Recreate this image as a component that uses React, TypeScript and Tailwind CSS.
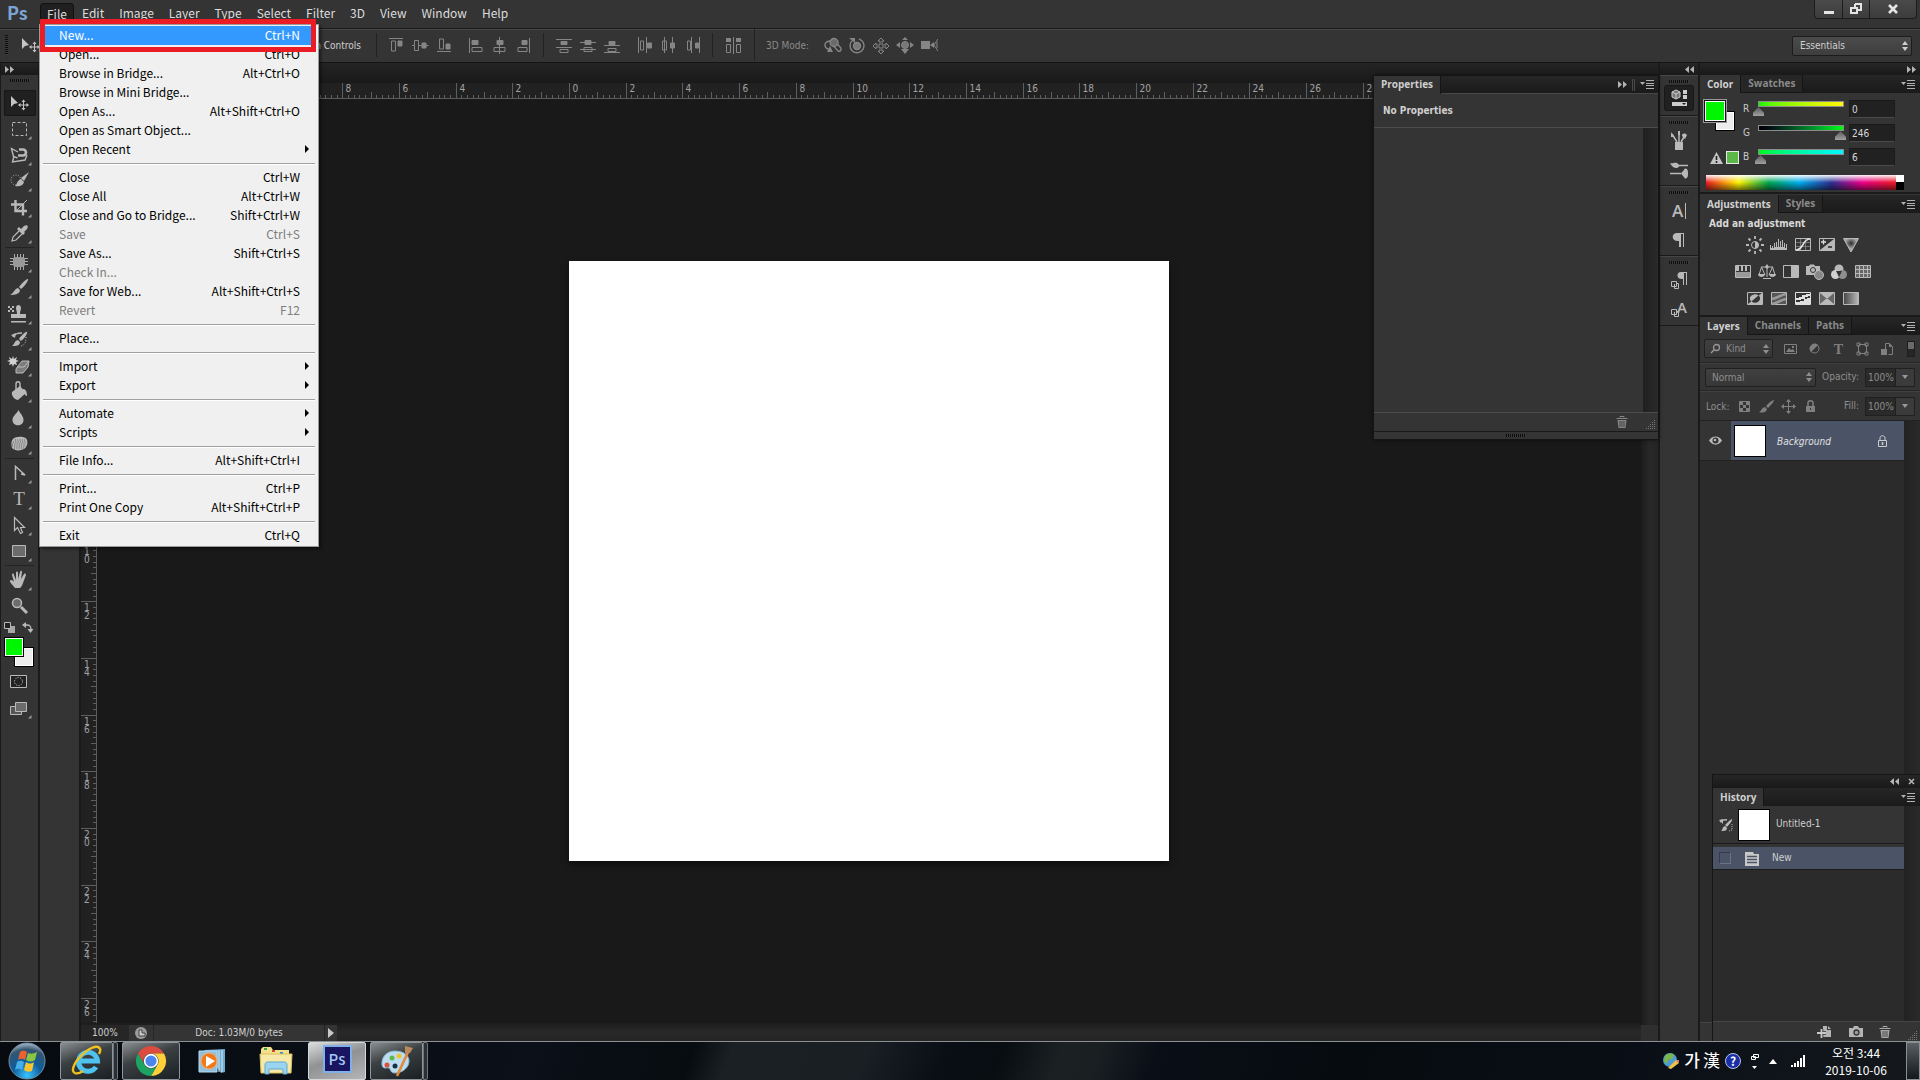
import { ReactNode } from "react";

type MenuEntry = { label: string; keys?: string; disabled?: boolean; sub?: boolean };

const MENUS = ["File", "Edit", "Image", "Layer", "Type", "Select", "Filter", "3D", "View", "Window", "Help"];

const FILE_MENU: MenuEntry[][] = [
  [
    { label: "New...", keys: "Ctrl+N" },
    { label: "Open...", keys: "Ctrl+O" },
    { label: "Browse in Bridge...", keys: "Alt+Ctrl+O" },
    { label: "Browse in Mini Bridge..." },
    { label: "Open As...", keys: "Alt+Shift+Ctrl+O" },
    { label: "Open as Smart Object..." },
    { label: "Open Recent", sub: true },
  ],
  [
    { label: "Close", keys: "Ctrl+W" },
    { label: "Close All", keys: "Alt+Ctrl+W" },
    { label: "Close and Go to Bridge...", keys: "Shift+Ctrl+W" },
    { label: "Save", keys: "Ctrl+S", disabled: true },
    { label: "Save As...", keys: "Shift+Ctrl+S" },
    { label: "Check In...", disabled: true },
    { label: "Save for Web...", keys: "Alt+Shift+Ctrl+S" },
    { label: "Revert", keys: "F12", disabled: true },
  ],
  [{ label: "Place..." }],
  [
    { label: "Import", sub: true },
    { label: "Export", sub: true },
  ],
  [
    { label: "Automate", sub: true },
    { label: "Scripts", sub: true },
  ],
  [{ label: "File Info...", keys: "Alt+Shift+Ctrl+I" }],
  [
    { label: "Print...", keys: "Ctrl+P" },
    { label: "Print One Copy", keys: "Alt+Shift+Ctrl+P" },
  ],
  [{ label: "Exit", keys: "Ctrl+Q" }],
];

function Svg({ w, h, children }: { w: number; h: number; children: ReactNode }) {
  return (
    <svg width={w} height={h} viewBox={`0 0 ${w} ${h}`} fill="none" className="block shrink-0" aria-hidden="true">
      {children}
    </svg>
  );
}

function Grip() {
  return <div className="h-[3px] w-5 bg-[repeating-linear-gradient(90deg,#0c0c0c_0_1px,#3a3a3a_1px_2px)]" />;
}

function UpDown() {
  return (
    <Svg w={6} h={10}>
      <path d="M3 0l3 4H0zM3 10l3-4H0z" fill="currentColor" />
    </Svg>
  );
}

function PanelMenuIcon() {
  return (
    <Svg w={14} h={9}>
      <path d="M0 2h5L2.500 5z" fill="#b0b0b0" />
      <path d="M6 .5h8M6 3.500h8M6 5.500h8M6 8.500h8" stroke="#b0b0b0" />
    </Svg>
  );
}

function Chevrons({ left }: { left?: boolean }) {
  return (
    <Svg w={9} h={7}>
      <path d={left ? "M4 0v7L0 3.500zM9 0v7L5 3.500z" : "M0 0v7l4-3.500zM5 0v7l4-3.500z"} fill="#b4b4b4" />
    </Svg>
  );
}

function TrashIcon() {
  return (
    <Svg w={12} h={12}>
      <path d="M4 1.500V.5h4v1M.5 2.500h11" stroke="#a8a8a8" />
      <path d="M1.500 4h9l-1 8h-7z" fill="#a8a8a8" />
      <path d="M4 5v6M6 5v6M8 5v6" stroke="#343434" strokeWidth=".8" />
    </Svg>
  );
}

function ResizeDots() {
  return (
    <Svg w={10} h={10}>
      {[0, 1, 2, 3, 4].map((row) =>
        [0, 1, 2, 3, 4].filter((col) => col + row >= 4).map((col) => <rect key={`${row}-${col}`} x={col * 2} y={row * 2} width="1" height="1" fill="#757575" />)
      )}
    </Svg>
  );
}

/* ---------- menu bar ---------- */

function FileMenu() {
  return (
    <div className="absolute top-[21px] left-[-1px] z-30 w-70 border border-[#9a9a9a] bg-[#f0f0f0] py-px text-black shadow-[2px_2px_3px_rgba(0,0,0,0.5)]">
      {FILE_MENU.map((group, g) => (
        <div key={g}>
          {g > 0 && (
            <div className="flex h-[9px] items-center px-[3px]">
              <div className="h-[2px] w-full border-t border-[#a0a0a0] bg-white" />
            </div>
          )}
          {group.map((item) => (
            <button
              key={item.label}
              disabled={item.disabled}
              className={`mx-[3px] flex h-[19px] w-[272px] items-center justify-between pb-[2px] pl-4 text-left ${
                item.label === "New..." ? "bg-[#3399ff] text-white" : item.disabled ? "text-[#7d7d7d]" : "text-black"
              } ${item.sub ? "pr-[6px]" : "pr-[15px]"}`}
            >
              <span>{item.label}</span>
              {item.keys && <span>{item.keys}</span>}
              {item.sub && (
                <Svg w={4} h={8}>
                  <path d="M0 0l4 4-4 4z" fill="#000" />
                </Svg>
              )}
            </button>
          ))}
        </div>
      ))}
      <div className="pointer-events-none absolute top-[-6px] left-0 h-[33px] w-[276px] border-[5px] border-[#ec1c24]" />
    </div>
  );
}

function MenuBar() {
  return (
    <header className="flex h-7 shrink-0 justify-between bg-[#343434] font-['Noto_Sans_CJK_KR',sans-serif] text-[12px] leading-[18px] text-[#dcdcdc]">
      <div className="flex">
        <h1 className="w-10 pt-px pl-[7px] font-['Noto_Sans_CJK_KR',sans-serif] text-[18px] leading-[22px] font-bold text-[#7ba5d6]">Ps</h1>
        <nav className="flex pt-[3px]">
          {MENUS.map((name) =>
            name === "File" ? (
              <div key={name} className="relative">
                <button className="h-[21px] rounded-t border border-b-0 border-[#111] bg-[#202020] px-[6px] pb-px leading-[18px]">{name}</button>
                <FileMenu />
              </div>
            ) : (
              <button key={name} className="h-5 pr-[7px] pl-2 leading-5">
                {name}
              </button>
            )
          )}
        </nav>
      </div>
      <div className="mr-[3px] flex h-[19px] divide-x divide-[#1c1c1c] rounded-b border border-t-0 border-[#1c1c1c] bg-linear-to-b from-[#4a4a4a] to-[#3c3c3c]">
        <button aria-label="Minimize" className="flex w-7 items-center justify-center">
          <Svg w={12} h={12}>
            <path d="M1 8h10v3H1z" fill="#e4e4e4" />
          </Svg>
        </button>
        <button aria-label="Restore" className="flex w-[27px] items-center justify-center">
          <Svg w={12} h={12}>
            <path d="M5 1h6v6H8M5 4V1" stroke="#e4e4e4" strokeWidth="2" />
            <path d="M1 5h6v5H1z" stroke="#e4e4e4" strokeWidth="2" />
          </Svg>
        </button>
        <button aria-label="Close" className="flex w-[46px] items-center justify-center">
          <Svg w={12} h={12}>
            <path d="M2 2l8 8M10 2l-8 8" stroke="#e4e4e4" strokeWidth="2.600" />
          </Svg>
        </button>
      </div>
    </header>
  );
}

/* ---------- options bar ---------- */

const G = "#858585";

const ALIGN_A = [
  <path d="M1 1.500h14M3.500 4h4v10h-4z M10 4h4v5h-4z" stroke={G} fill="none" key="f" />,
  <path d="M0 8.500h2.500v-5h4v10h-4v-5M6.500 8.500h10M10 6h4v5h-4z" stroke={G} key="g" />,
  <path d="M1 14.500h14M3.500 2h4v10h-4z M10 7h4v5h-4z" stroke={G} key="h" />,
];

const ALIGN_B = [
  <path d="M2.500 1v15M5 3.500h6v4H5z M5 10.500h10v4H5z" stroke={G} key="a" />,
  <path d="M8.500 0v17M6 3.500h6v4H6z M3 10.500h11v4H3z" stroke={G} key="b" />,
  <path d="M14.500 1v15M7 3.500h5v4H7z M3 10.500h9v4H3z" stroke={G} key="c" />,
];

const DIST_A = [
  <path d="M0 2.500h16M5 4.500h6v3H5z M0 10.500h16M4 12.500h8v3H4z" stroke={G} key="a" />,
  <path d="M0 5.500h16M5 3.500h6v4H5z M0 12.500h16M4 10.500h8v4H4z" stroke={G} key="b" />,
  <path d="M0 8.500h16M5 4.500h6v3H5z M0 15.500h16M4 11.500h8v3H4z" stroke={G} key="c" />,
];

const DIST_B = [
  <path d="M2.500 0v16M4.500 4h3v9h-3z M10.500 0v16M11.500 6h4v5h-4z" stroke={G} key="a" />,
  <path d="M4.500 0v16M2.500 4h4v9h-4z M12.500 0v16M10.500 6h4v5h-4z" stroke={G} key="b" />,
  <path d="M7.500 0v16M3.500 4h3v9h-3z M15.500 0v16M11.500 6h3v5h-3z" stroke={G} key="c" />,
];

// solid half of every align / distribute glyph
const SOLID: Record<string, string[]> = {
  alignA: ["M10 4h4v5h-4z", "M10 6h4v5h-4z", "M10 7h4v5h-4z"],
  alignB: ["M5 3h6v5H5z", "M6 3h6v5H6z", "M7 3h5v5H7z"],
  distA: ["M5 4h6v4H5z", "M5 3h6v5H5z", "M5 4h6v4H5z"],
  distB: ["M11 6h5v5h-5z", "M10 6h5v5h-5z", "M11 6h4v5h-4z"],
};

function IconRun({ icons, solid }: { icons: ReactNode[]; solid: string[] }) {
  return (
    <div className="flex">
      {icons.map((icon, i) => (
        <button key={i} className="flex w-6 justify-center">
          <Svg w={17} h={17}>
            {icon}
            <path d={solid[i]} fill={G} />
          </Svg>
        </button>
      ))}
    </div>
  );
}

const MODES_3D = [
  <g key="orbit" stroke={G} strokeWidth="1.400">
    <circle cx="10" cy="5.500" r="4" fill="#6a6a6a" />
    <path d="M6 4C2 4 0 7 1.500 10c1 2 3 2.500 5 2.500" />
    <path d="M10 9.500l4 4.500c3 1 4-2 2-4l-3-3.500" />
    <path d="M6 9l3 6H3z" fill={G} stroke="none" />
  </g>,
  <g key="roll" stroke={G} strokeWidth="1.400">
    <circle cx="9" cy="9" r="3.500" fill="#777" />
    <path d="M5 3a7 7 0 1 0 6-1" />
    <path d="M1 1h6v5z" fill={G} stroke="none" />
  </g>,
  <path key="pan" d="M9 1l3 3h-2v4h4V6l3 3-3 3v-2h-4v4h2l-3 3-3-3h2v-4H4v2L1 9l3-3v2h4V4H6z" stroke={G} />,
  <g key="slide">
    <circle cx="9" cy="8" r="3.500" fill="#777" stroke={G} />
    <path d="M0 8l4-3v6zM18 8l-4-3v6zM9 0l3 3H6zM9 17l4-5H5z" fill={G} />
  </g>,
  <g key="zoom">
    <path d="M1 4h9v8H1zM10 8l4-3v6z" fill={G} />
    <path d="M18 2l-4 6 4 6M17 5v6" stroke={G} />
  </g>,
];

function MoveGlyph() {
  return (
    <>
      <path d="M7 6v11l3-3 4-1z" fill="#c4c4c4" />
      <path d="M19.500 10.500v9M15 15h9" stroke="#c4c4c4" />
      <path d="M19.500 9.500l2 2.500h-4zM19.500 20.500l2-2.500h-4zM14 15l2.500-2v4zM25 15l-2.500-2v4z" fill="#c4c4c4" />
    </>
  );
}

function OptionsBar() {
  return (
    <div className="flex h-[34px] shrink-0 items-center justify-between border-t border-[#1a1a1a] bg-[#343434] text-[10px] text-[#cfcfcf] shadow-[inset_0_1px_#474747]">
      <div className="flex h-full items-center pb-px">
        <div className="ml-[5px] h-5 w-[3px] bg-[repeating-linear-gradient(#0c0c0c_0_1px,#3a3a3a_1px_2px)]" />
        <div className="ml-[7px]">
          <Svg w={32} h={26}>
            <MoveGlyph />
          </Svg>
        </div>
        <label className="flex w-[314px] items-center justify-end gap-1">
          <input type="checkbox" className="h-3 w-3" />
          Show Transform Controls
        </label>
        <div className="ml-[15px] h-6 w-px bg-[#222]" />
        <div className="ml-[7px] flex gap-[7px]">
          <IconRun icons={ALIGN_A} solid={SOLID.alignA} />
          <IconRun icons={ALIGN_B} solid={SOLID.alignB} />
        </div>
        <div className="ml-2 h-6 w-px bg-[#222]" />
        <div className="ml-2 flex gap-2">
          <IconRun icons={DIST_A} solid={SOLID.distA} />
          <IconRun icons={DIST_B} solid={SOLID.distB} />
        </div>
        <div className="ml-2 h-6 w-px bg-[#222]" />
        <button className="ml-2 flex w-6 justify-center" aria-label="Auto-align layers">
          <Svg w={17} h={17}>
            <path d="M1 1h5v4H1zM11 1h5v4h-5z" fill={G} />
            <path d="M1.500 7.500h4v8h-4zM11.500 7.500h4v8h-4zM8.500 0v17" stroke={G} />
          </Svg>
        </button>
        <div className="ml-[9px] h-full w-px bg-[#222]" />
        <span className="ml-[11px] w-[55px] text-[#8a8a8a]">3D Mode:</span>
        {MODES_3D.map((icon, i) => (
          <button key={i} className="flex w-6 justify-center">
            <Svg w={18} h={17}>{icon}</Svg>
          </button>
        ))}
      </div>
      <div className="relative mr-2 flex items-center text-[#cfcfcf]">
        <select aria-label="Workspace" className="h-5 w-30 appearance-none rounded-xs border border-[#1c1c1c] bg-linear-to-b from-[#4b4b4b] to-[#3e3e3e] px-[7px] leading-4">
          <option>Essentials</option>
        </select>
        <div className="pointer-events-none absolute right-1">
          <UpDown />
        </div>
      </div>
    </div>
  );
}

/* ---------- toolbar ---------- */

const C = "#b9b9b9";

const TOOLS: { name: string; group: number; plain?: boolean; icon: ReactNode }[] = [
  { name: "Move", group: 0, plain: true, icon: <MoveGlyph /> },
  { name: "Marquee", group: 0, icon: <path d="M8.500 6.500h14v13h-14z" stroke={C} strokeDasharray="3 2" /> },
  {
    name: "Lasso",
    group: 0,
    icon: (
      <g stroke={C}>
        <path d="M14 10L7.500 6.500l2 8 4 1.500M10 14l-1.500 6L21 18l2-5" strokeWidth="1.400" />
        <path d="M15 7.500h4a3 3 0 0 1 0 6h-5" strokeWidth="2.600" />
      </g>
    ),
  },
  {
    name: "Quick Selection",
    group: 0,
    icon: (
      <>
        <circle cx="12" cy="12" r="5" stroke={C} strokeDasharray="1 1.500" />
        <path d="M25 4l-8 6 3 3z" fill={C} />
        <path d="M17 11l3 3c-1 4-5 5-9 4 2-1 2-6 6-7z" fill={C} />
      </>
    ),
  },
  {
    name: "Crop",
    group: 0,
    icon: (
      <g stroke={C}>
        <path d="M7 10.500h12v11M11.500 6v11H23" strokeWidth="2.400" />
        <path d="M12 17L23 6" />
      </g>
    ),
  },
  {
    name: "Eyedropper",
    group: 0,
    icon: (
      <>
        <path d="M17 9l3-3c3-2 5 0 3 3l-3 3 1 1-2 2-6-6 2-2z" fill={C} />
        <path d="M15 11l-6 6-1 4 4-1 6-6" stroke={C} strokeWidth="1.200" />
      </>
    ),
  },
  {
    name: "Healing",
    group: 1,
    icon: (
      <>
        <path d="M10.500 5v16M13.500 5v16M16.500 5v16M19.500 5v16M6 9.500h18M6 12.500h18M6 15.500h18" stroke={C} strokeWidth=".9" />
        <rect x="9" y="8" width="12" height="10" rx="3" fill="#999" />
      </>
    ),
  },
  {
    name: "Brush",
    group: 1,
    icon: <path d="M24 4c1 1-4 8-7 10l-2-2c2-3 8-9 9-8zM14 13l2 2c0 4-5 5-10 5 4-2 4-6 8-7z" fill={C} />,
  },
  {
    name: "Clone Stamp",
    group: 1,
    icon: (
      <>
        <path d="M4 5h2v2H4zM8 5h2v2H8zM6 7h2v2H6zM4 9h2v2H4zM8 9h2v2H8z" fill={C} />
        <path d="M12 7c0-4 5-4 5 0 0 2-1 3-1 6h6v4H7v-4h6c0-3-1-4-1-6zM7 20h15v1.500H7z" fill={C} />
      </>
    ),
  },
  {
    name: "History Brush",
    group: 1,
    icon: (
      <>
        <path d="M23 5c1 1-3 7-6 9l-2-2c2-3 7-8 8-7zM14 13l2 2c0 4-4 4-8 4 3-2 2-5 6-6z" fill={C} />
        <path d="M9 10c1-3 5-4 9-4" stroke={C} strokeWidth="1.500" />
        <path d="M7 8l5-2-1 5z" fill={C} />
        <path d="M22 10c0 5-1 8-5 9" stroke={C} strokeDasharray="1 1.500" />
      </>
    ),
  },
  {
    name: "Background Eraser",
    group: 1,
    icon: (
      <>
        <path d="M14 13l4-5h7l-1 6-5 6h-7v-4z" fill="#7c7c7c" stroke={C} />
        <path d="M13 14h7l5-6" stroke={C} />
        <path d="M9 3l1 3 3-2-1 3 3 1-3 1 1 3-3-1-1 3-1-3-3 1 1-3-3-1 3-1-1-3 3 2z" fill="#d0d0d0" />
      </>
    ),
  },
  {
    name: "Paint Bucket",
    group: 1,
    icon: (
      <>
        <path d="M8 13l8-6 6 7-8 7c-3 0-7-4-6-8z" fill={C} />
        <path d="M12 12V5c0-3 4-3 4 0v5" stroke={C} strokeWidth="1.400" />
        <path d="M19 10c3 0 4 3 4 7-2 0-2-3-4-3z" fill={C} />
      </>
    ),
  },
  { name: "Blur", group: 1, icon: <path d="M14.500 5c2 4 5 6 5 10 0 7-11 7-11 0 0-4 4-6 6-10z" fill={C} /> },
  {
    name: "Sponge",
    group: 1,
    icon: (
      <>
        <path d="M9 8c3-3 13-3 14 1 1 3 0 7-3 9-4 2-9 2-12-1-1-3-1-7 1-9z" fill={C} />
        <path d="M9 11h13M8 13h14M8 15h14M10 17h10M11 9h10" stroke="#555" strokeDasharray="1 1.300" />
      </>
    ),
  },
  { name: "Pen", group: 2, icon: <path d="M11.500 20V6.500L21 15l-4-1" stroke={C} strokeWidth="1.500" /> },
  {
    name: "Type",
    group: 2,
    icon: (
      <text x="15" y="19" textAnchor="middle" fontFamily="Liberation Serif" fontSize="19" fill={C}>
        T
      </text>
    ),
  },
  { name: "Path Selection", group: 2, icon: <path d="M10.500 5.500v13l3-3 3 6 2-1-2-5h4z" stroke={C} strokeWidth="1.200" /> },
  { name: "Rectangle", group: 2, icon: <path d="M8.500 7.500h13v11h-13z" fill="#6c6c6c" stroke={C} /> },
  {
    name: "Hand",
    group: 3,
    icon: (
      <path
        d="M11 21c-2-3-5-5-5-7s3-1 4 1L8 8c0-2 2-2 2 0l2 5V6c0-2 2-2 2 0v6l2-7c1-2 2-1 2 0l-1 7 3-5c1-1 2 0 2 1l-3 8c-1 3-2 4-3 5z"
        fill={C}
      />
    ),
  },
  {
    name: "Zoom",
    group: 3,
    plain: true,
    icon: (
      <>
        <circle cx="13" cy="10" r="4.500" fill="#6c6c6c" stroke={C} strokeWidth="1.500" />
        <path d="M17 14l6 6" stroke={C} strokeWidth="3" />
      </>
    ),
  },
];

function ToolButton({ name, plain, icon }: { name: string; plain?: boolean; icon: ReactNode }) {
  const active = name === "Move";
  return (
    <button
      aria-label={name}
      className={`mx-[3px] flex h-[26px] w-8 rounded-xs ${active ? "bg-[#202020] shadow-[inset_0_0_0_1px_#161616]" : ""}`}
    >
      <Svg w={32} h={26}>
        {icon}
        {!plain && <path d="M27.500 20v3.500H24z" fill="#9a9a9a" />}
      </Svg>
    </button>
  );
}

function Toolbar() {
  return (
    <aside className="flex w-10 shrink-0 flex-col border-r-2 border-l border-[#1a1a1a] bg-[#343434]">
      <div className="flex h-3 items-center bg-linear-to-b from-[#262626] to-[#191919] pl-1">
        <Chevrons />
      </div>
      <div className="flex h-[15px] justify-center pt-1">
        <Grip />
      </div>
      {[0, 1, 2, 3].map((g) => (
        <div key={g}>
          {g > 0 && <div className="mx-1 my-px h-px bg-[#232323]" />}
          {TOOLS.filter((t) => t.group === g).map((t) => (
            <ToolButton key={t.name} name={t.name} plain={t.plain} icon={t.icon} />
          ))}
        </div>
      ))}
      <div className="flex h-4 items-center gap-[7px] pl-[3px]">
        <Svg w={11} h={11}>
          <path d="M4 4h7v7H4z" fill="#a8a8a8" />
          <path d="M.5.5h6v6h-6z" fill="#222" stroke={C} />
        </Svg>
        <Svg w={11} h={11}>
          <path d="M3 3h2c3 0 4 1 4 5" stroke={C} strokeWidth="1.400" />
          <path d="M0 3l4-3v6zM8.500 11l3-4h-6z" fill={C} />
        </Svg>
      </div>
      <div className="relative h-[30px]">
        <div className="absolute top-3 left-[13px] h-5 w-5 border border-black bg-[#ececec] shadow-[inset_0_0_0_1px_#fff]" />
        <div className="absolute top-[2px] left-[3px] h-5 w-5 border border-black bg-[#00f600] shadow-[inset_0_0_0_1px_#fff]" />
      </div>
      <button aria-label="Quick mask" className="mx-[3px] mt-1 h-[26px] w-8">
        <Svg w={32} h={26}>
          <path d="M6.500 6.500h16v12h-16z" fill="#222" stroke={C} />
          <circle cx="14.500" cy="12.500" r="4" stroke="#ddd" strokeDasharray="1 1.500" />
        </Svg>
      </button>
      <ToolButton
        name="Screen mode"
        icon={
          <>
            <path d="M6.500 11.500h11v8h-11z" fill="#555" stroke={C} />
            <path d="M11.500 7.500h11v9h-11z" fill="#6c6c6c" stroke={C} />
          </>
        }
      />
    </aside>
  );
}

/* ---------- document ---------- */

const CM = 56.7 / 2;

function HorizontalRuler() {
  const ticks = Array.from({ length: 276 }, (_, i) => i - 86);
  return (
    <svg className="block h-4 w-full shrink-0 border-b border-[#5c5c5c] bg-[#212121]" fontSize="10" fill="#a2a2a2">
      {ticks.map((t) => {
        const x = Math.round(488 + (t * CM) / 5) + 0.5;
        const label = t % 10 === 0;
        return (
          <g key={t}>
            <line x1={x} x2={x} y1={label ? 0 : t % 5 === 0 ? 9 : 12} y2="16" stroke="#5e5e5e" />
            {label && (
              <text x={x + 3} y="9">
                {Math.abs(t / 5)}
              </text>
            )}
          </g>
        );
      })}
    </svg>
  );
}

function VerticalRuler() {
  const ticks = Array.from({ length: 164 }, (_, i) => i - 28);
  return (
    <svg className="block h-full w-4 shrink-0 border-r border-[#5c5c5c] bg-[#212121]" fontSize="10" fill="#a2a2a2">
      {ticks.map((t) => {
        const y = Math.round(162 + (t * CM) / 5) + 0.5;
        const label = t % 10 === 0;
        return (
          <g key={t}>
            <line x1={label ? 0 : t % 5 === 0 ? 10 : 12} x2="16" y1={y} y2={y} stroke="#5e5e5e" />
            {label &&
              String(Math.abs(t / 5))
                .split("")
                .map((digit, i) => (
                  <text key={i} x="3" y={y + 9 + i * 8}>
                    {digit}
                  </text>
                ))}
          </g>
        );
      })}
    </svg>
  );
}

function DocumentArea() {
  return (
    <main className="flex min-w-0 flex-1 flex-col border-r-2 border-l-2 border-[#1a1a1a] bg-[#191919]">
      <div className="h-5 shrink-0 bg-linear-to-b from-[#242424] to-[#191919]" />
      <div className="flex min-h-0 flex-1">
        <div className="flex min-w-0 flex-1 flex-col">
          <HorizontalRuler />
          <div className="flex min-h-0 flex-1">
            <VerticalRuler />
            <div className="flex flex-1 items-center justify-center">
              <div className="h-150 w-150 bg-white shadow-[0_3px_6px_rgba(0,0,0,0.5)]" />
            </div>
          </div>
          <div className="flex h-[18px] shrink-0 items-center bg-linear-to-b from-[#1c1c1c] via-[#292929] to-[#242424] pt-px text-[10px] leading-4 text-[#d0d0d0]">
            <span className="h-4 w-12 bg-[#262626] pl-[11px]">100%</span>
            <span className="flex h-4 w-6 items-center justify-center bg-[#343434]">
              <Svg w={12} h={12}>
                <circle cx="6" cy="6" r="6" fill="#9c9c9c" />
                <path d="M4 3h3v3h3v3H4z" fill="#ccc" stroke="#444" />
              </Svg>
            </span>
            <span className="ml-px h-4 w-[170px] bg-[#343434] text-center">Doc: 1.03M/0 bytes</span>
            <button aria-label="Status options" className="ml-px flex h-4 w-3 items-center justify-center bg-[#343434]">
              <Svg w={6} h={10}>
                <path d="M0 0v10l6-5z" fill="#c8c8c8" />
              </Svg>
            </button>
          </div>
        </div>
        <div className="flex w-[17px] flex-col justify-end bg-linear-to-r from-[#1c1c1c] via-[#282828] to-[#242424]">
          <div className="h-4 bg-[#2f2f2f]" />
        </div>
      </div>
    </main>
  );
}

function PropertiesPanel() {
  return (
    <section className="absolute top-[76px] right-[262px] z-10 w-[284px] bg-[#343434] text-[10px] font-bold text-[#cfcfcf] shadow-[0_0_0_1px_#151515,0_0_4px_#000]">
      <div className="flex h-[18px] items-center justify-between border-b border-[#474747] bg-linear-to-b from-[#262626] to-[#1a1a1a]">
        <button className="h-[18px] border-r border-[#151515] bg-[#343434] px-[7px] font-['Open_Sans',sans-serif] text-[10px]">Properties</button>
        <div className="flex items-center gap-[5px] pr-1">
          <Chevrons />
          <div className="h-3 w-[3px] border-x border-[#4a4a4a]" />
          <PanelMenuIcon />
        </div>
      </div>
      <h2 className="h-[34px] border-b border-[#4c4c4c] pl-[9px] leading-[34px]">No Properties</h2>
      <div className="flex h-[284px] justify-end">
        <div className="w-[15px] bg-linear-to-r from-[#202020] to-[#2a2a2a]" />
      </div>
      <div className="flex h-[19px] items-end justify-end gap-[18px] border-t border-[#4c4c4c] pr-[2px] pb-px">
        <span className="pb-[2px] opacity-70">
          <TrashIcon />
        </span>
        <ResizeDots />
      </div>
      <div className="flex h-2 items-center justify-center border-t border-[#1a1a1a]">
        <Grip />
      </div>
    </section>
  );
}

/* ---------- icon dock ---------- */

const DOCK: { name: string; icon: ReactNode }[][] = [
  [
    {
      name: "Properties",
      icon: (
        <>
          <path d="M7 2l4 2v5l-4 2-4-2V4z" fill="#777" stroke="#ccc" />
          <path d="M3 4l4 2 4-2M7 6v5" stroke="#ccc" />
          <path d="M14 2h4v4h-4zM14 7h4v4h-4zM3 14h15v4H3z" fill="#ccc" />
          <path d="M13 15h4l-2 2z" fill="#222" />
        </>
      ),
    },
  ],
  [
    {
      name: "Brush presets",
      icon: (
        <>
          <path d="M6 11h8v8H6z" fill={C} />
          <path d="M8 11L3 3M10 11V3M12 11l3-5" stroke={C} strokeWidth="1.500" />
          <path d="M2 1l3 5H2zM9 0h2v4H9zM13 5c0-3 3-3 5-1l-2 4z" fill={C} />
        </>
      ),
    },
    {
      name: "Brush",
      icon: (
        <>
          <path d="M10 6.500h9M1 14.500h11" stroke={C} strokeWidth="1.600" />
          <path d="M1 4c3 1 4-1 7 0 3 2 3 4 0 5-3 0-5-1-7-5zM12 14.500l4-5c2 0 3 1 3 5s-1 5-3 5z" fill={C} />
        </>
      ),
    },
  ],
  [
    {
      name: "Character",
      icon: (
        <>
          <text x="3" y="16" fontSize="17" fontFamily="Open Sans" fontWeight="600" fill={C}>
            A
          </text>
          <path d="M16.500 2v16" stroke={C} />
        </>
      ),
    },
    { name: "Paragraph", icon: <path d="M8 4h7v14h-1V5h-2v13h-2v-6C2 13 2 4 8 4z" fill={C} /> },
  ],
  [
    {
      name: "Paragraph styles",
      icon: (
        <>
          <path d="M12 1h6v13h-1V2h-2v12h-1V8C7 9 7 1 12 1z" fill={C} />
          <path d="M2.500 10.500h5v5h-5z M5.500 13v4.500h4v-5H8" stroke={C} />
        </>
      ),
    },
    {
      name: "Character styles",
      icon: (
        <>
          <text x="8" y="14" fontSize="15" fontFamily="Open Sans" fontWeight="600" fill={C}>
            A
          </text>
          <path d="M2.500 10.500h5v5h-5z M5.500 13v4.500h4v-5H8" stroke={C} />
        </>
      ),
    },
  ],
];

function IconDock() {
  return (
    <aside className="w-10 shrink-0 border-r-2 border-[#1a1a1a] bg-[#343434]">
      <div className="flex h-3 items-center justify-end bg-linear-to-b from-[#262626] to-[#191919] pr-1">
        <Chevrons left />
      </div>
      {DOCK.map((group, g) => (
        <div key={g} className="flex flex-col items-center border-t border-b border-t-[#464646] border-b-[#1a1a1a] pt-1 pb-[2px]">
          <Grip />
          <div className="pt-[3px]">
            {group.map((item) => (
              <button
                key={item.name}
                aria-label={item.name}
                className={`flex w-7 items-center justify-center rounded-xs ${
                  item.name === "Properties" ? "mb-[3px] h-6 bg-[#202020] shadow-[0_0_0_1px_#171717]" : "h-[28px]"
                }`}
              >
                <Svg w={24} h={24}>
                  <g transform="translate(2 2)">{item.icon}</g>
                </Svg>
              </button>
            ))}
          </div>
        </div>
      ))}
    </aside>
  );
}

/* ---------- right panels ---------- */

function PanelTabs({ tabs }: { tabs: string[] }) {
  return (
    <div className="flex h-[18px] shrink-0 items-center justify-between bg-linear-to-b from-[#262626] to-[#1a1a1a] pr-[5px] font-['Open_Sans',sans-serif] text-[10px] font-bold">
      <div className="flex h-full" role="tablist">
        {tabs.map((tab, i) => (
          <button
            key={tab}
            role="tab"
            aria-selected={i === 0}
            className={`h-full border-r border-[#151515] px-[7px] ${
              i === 0 ? "bg-[#343434] text-[#d0d0d0]" : "border-b bg-[#262626] text-[#8a8a8a]"
            }`}
          >
            {tab}
          </button>
        ))}
      </div>
      <PanelMenuIcon />
    </div>
  );
}

const CHANNELS = [
  { name: "R", value: 0, track: "bg-linear-to-r from-[#00f606] to-[#fff606]" },
  { name: "G", value: 246, track: "bg-linear-to-r from-[#000006] to-[#00ff06]" },
  { name: "B", value: 6, track: "bg-linear-to-r from-[#00f600] to-[#00f6ff]" },
];

function ColorPanel() {
  return (
    <section className="border-b-2 border-[#1a1a1a]">
      <PanelTabs tabs={["Color", "Swatches"]} />
      <div className="flex h-[82px] pt-[7px] text-[10px] text-[#c8c8c8]">
        <div className="w-[43px]">
          <div className="relative ml-[5px] h-[51px]">
            <div className="absolute top-[11px] left-[10px] h-5 w-5 border border-black bg-[#ececec] shadow-[inset_0_0_0_1px_#fff]" />
            <div className="absolute top-[1px] left-0 h-5 w-5 border border-white bg-[#00f600] shadow-[0_0_0_1px_#111,0_0_0_2px_#999]" />
          </div>
          <div className="flex items-center justify-end gap-[3px] pr-1">
            <Svg w={13} h={12}>
              <path d="M6.500 0L13 12H0z" fill="#c4c4c4" />
              <path d="M6.500 4v4M6.500 9v2" stroke="#222" strokeWidth="1.600" />
            </Svg>
            <div className="h-[13px] w-[13px] border border-[#e8e8e8] bg-[#5cb947]" />
          </div>
        </div>
        <div>
          {CHANNELS.map((c) => (
            <div key={c.name} className="flex h-6 items-start">
              <label htmlFor={`channel-${c.name}`} className="w-[10px] leading-[18px]">
                {c.name}
              </label>
              <div className="w-24 pt-px">
                <div className={`mx-[5px] h-[6px] border border-[#8c8c8c] ${c.track}`} />
                <input
                  type="range"
                  aria-label={`${c.name} slider`}
                  min={0}
                  max={255}
                  defaultValue={c.value}
                  className="block h-[9px] w-full appearance-none bg-transparent [&::-webkit-slider-thumb]:h-[9px] [&::-webkit-slider-thumb]:w-[11px] [&::-webkit-slider-thumb]:appearance-none [&::-webkit-slider-thumb]:bg-linear-to-b [&::-webkit-slider-thumb]:from-[#5a5a5a] [&::-webkit-slider-thumb]:to-[#a0a0a0] [&::-webkit-slider-thumb]:[clip-path:polygon(50%_0,100%_65%,100%_100%,0_100%,0_65%)]"
                />
              </div>
              <input
                id={`channel-${c.name}`}
                type="text"
                defaultValue={c.value}
                className="h-[18px] w-[46px] border border-[#1a1a1a] border-b-[#4a4a4a] bg-[#212121] pl-[2px] text-[#d8d8d8]"
              />
            </div>
          ))}
        </div>
      </div>
      <div className="mb-[2px] ml-[6px] flex h-[15px] w-[198px]">
        <div className="flex-1 bg-[linear-gradient(to_bottom,rgba(255,255,255,0.95),transparent_50%,rgba(0,0,0,0.55)),linear-gradient(to_right,#ed1c24,#fff200_17%,#00a651_33%,#00aeef_49%,#2e3192_66%,#ec008c_82%,#ed1c24)]" />
        <div className="w-2 bg-linear-to-b from-white from-50% to-black to-50%" />
      </div>
    </section>
  );
}

const box = <path d="M2.500 3.500h15v12h-15z" stroke={C} />;

const ADJUSTMENTS: { name: string; icon: ReactNode }[][] = [
  [
    {
      name: "Brightness",
      icon: (
        <>
          <circle cx="10" cy="10" r="3.500" stroke={C} />
          <path d="M10 6.500a3.500 3.500 0 0 1 0 7z" fill={C} />
          <path d="M10 1v3M10 16v3M1 10h3M16 10h3M3.500 3.500l2 2M14.500 14.500l2 2M3.500 16.500l2-2M14.500 5.500l2-2" stroke={C} strokeWidth="1.800" />
        </>
      ),
    },
    {
      name: "Levels",
      icon: <path d="M1 15v-5h1v3h1v-2h1v2h1V8h1v4h1V7h1v5h1V4h1v8h1V6h1v6h1V5h1v7h1V8h1v5h1v-4h1v6z" fill={C} />,
    },
    {
      name: "Curves",
      icon: (
        <>
          {box}
          <path d="M7.500 4v11M12.500 4v11M3 7.500h14M3 11.500h14" stroke="#888" strokeWidth=".8" />
          <path d="M3 15c8 0 6-11 14-11" stroke="#e0e0e0" strokeWidth="1.600" />
        </>
      ),
    },
    {
      name: "Exposure",
      icon: (
        <>
          {box}
          <path d="M17 4v11H3z" fill={C} />
          <path d="M4 7h5M6.500 4.500v5" stroke="#ddd" strokeWidth="1.300" />
          <path d="M11 12h4" stroke="#222" strokeWidth="1.500" />
        </>
      ),
    },
    {
      name: "Vibrance",
      icon: (
        <>
          <defs>
            <radialGradient id="vibrance" cx=".5" cy=".35" r=".4">
              <stop stopColor="#2c2c2c" />
              <stop offset="1" stopColor="#a8a8a8" />
            </radialGradient>
          </defs>
          <path d="M2.500 3.500h15L10 17z" fill="url(#vibrance)" stroke={C} />
        </>
      ),
    },
  ],
  [
    {
      name: "Hue",
      icon: (
        <>
          {box}
          <path d="M3 4h3v5H3zM8 4h2v5H8zM12 4h2v5h-2z" fill={C} />
          <path d="M3 10h14v5H3z" fill="#999" />
        </>
      ),
    },
    {
      name: "Balance",
      icon: (
        <>
          <path d="M10 3v12M4 5h12M6 16.500h8M4.500 5L2 13M4.500 5L8 13M15.500 5L12 13M15.500 5L18 13" stroke={C} />
          <path d="M1 12h7c0 4-7 4-7 0zM12 12h7c0 4-7 4-7 0zM10 2l2 3-2 2-2-2z" fill={C} />
        </>
      ),
    },
    {
      name: "Black & White",
      icon: (
        <>
          {box}
          <path d="M10 4h7v11h-7z" fill={C} />
        </>
      ),
    },
    {
      name: "Photo Filter",
      icon: (
        <>
          <path d="M1 4h3l1-1.500h4L10 4h5v9H1z" fill={C} />
          <circle cx="8" cy="8" r="2.500" stroke="#333" />
          <circle cx="14" cy="13" r="4.500" fill="#888" stroke={C} />
        </>
      ),
    },
    {
      name: "Channel Mixer",
      icon: (
        <>
          <circle cx="10" cy="7" r="4.500" fill={C} />
          <circle cx="6.500" cy="12.500" r="4.500" fill="#d0d0d0" />
          <circle cx="13.500" cy="12.500" r="4.500" fill="#8e8e8e" />
          <path d="M7 9h6l-3 6z" fill="#333" />
        </>
      ),
    },
    {
      name: "Color Lookup",
      icon: (
        <>
          <path d="M2.500 3.500h15v12h-15z" fill="#666" stroke={C} />
          <path d="M6.500 4v11M10.500 4v11M14.500 4v11M3 7.500h14M3 11.500h14" stroke={C} />
        </>
      ),
    },
  ],
  [
    {
      name: "Invert",
      icon: (
        <>
          <path d="M2.500 3.500h15v12h-15z" fill="#3a3a3a" stroke={C} />
          <path d="M17 4v11H3z" fill={C} />
          <path d="M6.500 12.500a4.500 3.600 0 0 1 7-6z" fill={C} />
          <path d="M6.500 12.500a4.500 3.600 0 0 0 7-6z" fill="#333" />
        </>
      ),
    },
    {
      name: "Posterize",
      icon: (
        <>
          <path d="M2.500 3.500h15v12h-15z" fill="#555" stroke={C} />
          <path d="M3 10c6-1 8-4 14-5M3 15c6-1 8-4 14-5" stroke="#999" strokeWidth="2.600" />
        </>
      ),
    },
    {
      name: "Threshold",
      icon: (
        <>
          <path d="M2.500 3.500h15v12h-15z" fill="#333" stroke="#e0e0e0" />
          <path d="M3 9h3V8h3V6h4V5h4v2h-2v1h-3v2H8v1H3zM3 13h4v-1h4v-2h3V9h3v6H3z" fill="#e0e0e0" />
        </>
      ),
    },
    {
      name: "Selective Color",
      icon: (
        <>
          <path d="M2.500 3.500h15v12h-15z" fill="#666" stroke={C} />
          <path d="M3 4h14l-7 6zM3 15h14l-7-6z" fill={C} />
        </>
      ),
    },
    {
      name: "Gradient Map",
      icon: (
        <>
          <defs>
            <linearGradient id="gradient-map">
              <stop stopColor="#444" />
              <stop offset="1" stopColor="#bbb" />
            </linearGradient>
          </defs>
          <path d="M2.500 3.500h15v12h-15z" fill="url(#gradient-map)" stroke={C} />
        </>
      ),
    },
  ],
];

function AdjustmentsPanel() {
  return (
    <section className="mt-px border-b-2 border-[#1a1a1a]">
      <PanelTabs tabs={["Adjustments", "Styles"]} />
      <h2 className="h-[18px] pl-[9px] text-[10px] leading-[22px] font-bold text-[#d8d8d8]">Add an adjustment</h2>
      <div className="flex w-[206px] flex-col pb-[3px]">
        {ADJUSTMENTS.map((row, r) => (
          <div key={r} className="flex h-[27px] items-center justify-center">
            {row.map((a) => (
              <button key={a.name} aria-label={a.name} className="flex w-6 justify-center">
                <Svg w={20} h={20}>{a.icon}</Svg>
              </button>
            ))}
          </div>
        ))}
      </div>
    </section>
  );
}

function PercentField({ id, label }: { id: string; label: string }) {
  return (
    <div className="flex items-center">
      <label htmlFor={id} className="pr-[6px] pb-[2px]">
        {label}
      </label>
      <input id={id} type="text" defaultValue="100%" className="h-[19px] w-[31px] border border-[#202020] bg-[#2a2a2a] pl-[2px]" />
      <button aria-label={`${label} options`} className="flex h-[19px] w-[19px] items-center justify-center border border-l-0 border-[#202020] bg-[#3b3b3b]">
        <Svg w={6} h={4}>
          <path d="M0 0h6L3 4z" fill="#999" />
        </Svg>
      </button>
    </div>
  );
}

const FILTERS = [
  <g key="pixel">
    <path d="M1.500 3.500h12v9h-12z" stroke="#808080" />
    <path d="M3 11l3-4 2 2 2-1 2 3zM9 5h2v2H9z" fill="#808080" />
  </g>,
  <g key="adjust">
    <circle cx="7.500" cy="7.500" r="4.500" stroke="#808080" />
    <path d="M4 11L11 4A5 5 0 0 0 4 11z" fill="#808080" />
  </g>,
  <text key="type" x="7.500" y="13" textAnchor="middle" fontFamily="Liberation Serif" fontWeight="bold" fontSize="14" fill="#808080">
    T
  </text>,
  <path key="shape" d="M4 3.500h7M4 12.500h7M3.500 4v8M11.500 4v8M2 2h3v3H2zM10 2h3v3h-3zM2 11h3v3H2zM10 11h3v3h-3z" stroke="#808080" />,
  <g key="smart">
    <path d="M6.500 9V2.500h4l3 3v8h-4" stroke="#808080" />
    <path d="M2 8h6v6H2zM10 2l3 4h-3z" fill="#808080" />
  </g>,
];

const LOCKS = [
  <g key="pixels">
    <path d="M2.500 2.500h10v10h-10z" stroke="#808080" />
    <path d="M3 3h3v3H3zM9 3h3v3H9zM6 6h3v3H6zM3 9h3v3H3zM9 9h3v3H9z" fill="#808080" />
  </g>,
  <path key="paint" d="M15 1c0 2-4 6-6 8L7 7c2-2 6-6 8-6zM6 8l2 2c-1 4-5 4-8 3 3-1 2-4 6-5z" fill="#808080" />,
  <g key="position">
    <path d="M7.500 2v11M2 7.500h11" stroke="#808080" />
    <path d="M7.500 0l2.500 3H5zM7.500 15L10 12H5zM0 7.500L3 5v5zM15 7.500L12 5v5z" fill="#808080" />
  </g>,
  <g key="all">
    <path d="M5 7V4c0-3 5-3 5 0v3" stroke="#808080" strokeWidth="1.500" />
    <path d="M3 7h9v6H3z" fill="#808080" />
    <path d="M7.500 9v2" stroke="#333" />
  </g>,
];

const selectLook = "appearance-none rounded-xs border border-[#202020] bg-linear-to-b from-[#404040] to-[#373737]";

function LayersPanel() {
  return (
    <section className="flex min-h-0 flex-1 flex-col text-[10px] text-[#8e8e8e]">
      <PanelTabs tabs={["Layers", "Channels", "Paths"]} />
      <div className="flex h-7 shrink-0 items-center justify-between border-b border-[#262626] pr-[5px] pl-1">
        <div className="relative flex items-center">
          <select aria-label="Filter type" className={`h-[19px] w-[69px] pl-[21px] ${selectLook}`}>
            <option>Kind</option>
          </select>
          <div className="pointer-events-none absolute left-[6px]">
            <Svg w={11} h={11}>
              <circle cx="6.500" cy="4.500" r="3" stroke="#999" strokeWidth="1.300" />
              <path d="M4 7l-3 3" stroke="#999" strokeWidth="1.500" />
            </Svg>
          </div>
          <div className="pointer-events-none absolute right-1">
            <UpDown />
          </div>
        </div>
        <div className="flex pr-1">
          {FILTERS.map((icon, i) => (
            <button key={i} className="flex w-6 justify-center">
              <Svg w={15} h={15}>{icon}</Svg>
            </button>
          ))}
        </div>
        <div className="h-4 w-2 border border-[#1e1e1e] bg-linear-to-b from-[#6a6a6a] from-50% to-[#262626] to-50%" />
      </div>
      <div className="flex h-7 shrink-0 items-center justify-between border-t border-b border-t-[#404040] border-b-[#262626] pr-[5px] pl-[5px]">
        <div className="relative flex items-center">
          <select aria-label="Blend mode" className={`h-[19px] w-[111px] pl-[6px] ${selectLook}`}>
            <option>Normal</option>
          </select>
          <div className="pointer-events-none absolute right-1">
            <UpDown />
          </div>
        </div>
        <PercentField id="opacity" label="Opacity:" />
      </div>
      <div className="flex h-[30px] shrink-0 items-center justify-between border-t border-b border-t-[#404040] border-b-[#222] pr-[5px] pl-[6px]">
        <div className="flex items-center">
          <span className="w-[27px]">Lock:</span>
          {LOCKS.map((icon, i) => (
            <button key={i} className="flex w-[22px] justify-center">
              <Svg w={15} h={15}>{icon}</Svg>
            </button>
          ))}
        </div>
        <PercentField id="fill" label="Fill:" />
      </div>
      <div className="flex min-h-0 flex-1 bg-[#2b2b2b]">
        <div className="flex-1">
          <div className="flex h-10 border-b border-[#222] bg-[#343434]">
            <button aria-label="Layer visibility" className="flex w-[31px] items-center justify-center">
              <Svg w={13} h={9}>
                <path d="M0 4.500C3-1 10-1 13 4.500 10 10 3 10 0 4.500z" fill={C} />
                <circle cx="6.500" cy="4.500" r="3" fill="#333" />
                <circle cx="6" cy="4" r="1.300" fill={C} />
              </Svg>
            </button>
            <div className="flex flex-1 items-center justify-between bg-[#4b5467] pr-4 pl-[3px] text-[#e0e0e0]">
              <div className="flex items-center">
                <div className="h-8 w-8 border border-black bg-white" />
                <span className="pt-px pl-[11px] italic">Background</span>
              </div>
              <Svg w={11} h={12}>
                <path d="M3 5V3c0-3 5-3 5 0v2M1.500 5.500h8v6h-8z" stroke="#ccc" />
                <path d="M5.500 7v3" stroke="#ccc" strokeWidth="1.500" />
              </Svg>
            </div>
          </div>
        </div>
        <div className="w-4 bg-linear-to-r from-[#222] to-[#2a2a2a]" />
      </div>
      <div className="h-[19px] shrink-0 border-t border-[#464646] bg-[#343434]" />
    </section>
  );
}

function HistoryPanel() {
  return (
    <section className="absolute right-0 bottom-0 z-10 flex h-[267px] w-[208px] flex-col border-t border-l border-[#151515] bg-[#2b2b2b] text-[10px] text-[#cfcfcf]">
      <div className="flex h-[13px] shrink-0 items-center justify-end gap-[9px] bg-linear-to-b from-[#262626] to-[#191919] pr-[5px]">
        <Chevrons left />
        <Svg w={7} h={7}>
          <path d="M1 1l5 5M6 1L1 6" stroke="#b4b4b4" strokeWidth="1.600" />
        </Svg>
      </div>
      <PanelTabs tabs={["History"]} />
      <div className="flex min-h-0 flex-1">
        <div className="flex-1">
          <div className="flex h-[38px] items-center border-b border-[#1a1a1a] bg-[#343434] pl-[6px]">
            <Svg w={14} h={14}>
              <path d="M13 1c1 1-3 6-5 8L6 7c2-2 6-6 7-6zM6 8l2 2c0 3-3 3-6 3 2-1 1-4 4-5z" fill={C} />
              <path d="M1 4c2-2 4-3 7-2" stroke={C} strokeWidth="1.500" />
              <path d="M0 2l4-1v5z" fill={C} />
              <path d="M13 6v6l-3 1" stroke={C} strokeDasharray="1 1" />
            </Svg>
            <div className="ml-[5px] h-8 w-8 border border-black bg-white" />
            <span className="pb-[2px] pl-[6px]">Untitled-1</span>
          </div>
          <div className="h-[3px] bg-[#343434]" />
          <div className="flex h-[23px] items-center border-b border-[#1a1a1a] bg-[#4b5467] pl-[6px]">
            <div className="h-3 w-3 border border-[#333b4d] border-r-[#69728a] border-b-[#69728a]" />
            <div className="ml-[14px]">
              <Svg w={14} h={15}>
                <path d="M0 1h8l1 2h5v12H0z" fill="#c8c8c8" />
                <path d="M2 5.500h10M2 8.500h10M2 11.500h10" stroke="#4b5467" strokeWidth="1.500" />
              </Svg>
            </div>
            <span className="pb-[2px] pl-[13px]">New</span>
          </div>
        </div>
        <div className="w-4 bg-linear-to-r from-[#222] to-[#2a2a2a]" />
      </div>
      <div className="flex h-5 shrink-0 items-center border-t border-[#464646] bg-[#343434] pl-[104px]">
        <button aria-label="New document from state">
          <Svg w={14} h={12}>
            <path d="M6 0h4v4h4v7H6z" fill="#b4b4b4" />
            <path d="M11 0l3 3h-3z" fill="#b4b4b4" />
            <path d="M0 7h9M4.500 3v9" stroke="#343434" strokeWidth="3.600" />
            <path d="M0 7h9M4.500 3v9" stroke="#c8c8c8" strokeWidth="1.800" />
          </Svg>
        </button>
        <button aria-label="New snapshot" className="ml-[18px]">
          <Svg w={14} h={12}>
            <path d="M0 2h4l1-2h4l1 2h4v9H0z" fill="#b4b4b4" />
            <circle cx="7.500" cy="6.500" r="2.500" fill="#999" stroke="#333" strokeWidth="1.300" />
          </Svg>
        </button>
        <button aria-label="Delete state" className="ml-4">
          <TrashIcon />
        </button>
        <div className="ml-[17px] pt-2">
          <ResizeDots />
        </div>
      </div>
    </section>
  );
}

/* ---------- windows taskbar ---------- */

function IeIcon() {
  return (
    <Svg w={32} h={32}>
      <path d="M25 22a9.500 9.500 0 1 1 1.500-6H9" stroke="#4fc3f0" strokeWidth="5" />
      <path d="M4 28c-4-1-2-9 5-16C17 3 27-1 29 4c1 1 0 3-1 5" stroke="#f2c21c" strokeWidth="2.400" />
      <path d="M4 28c2 1 5 0 8-2" stroke="#f2c21c" strokeWidth="2.400" />
    </Svg>
  );
}

function ChromeIcon() {
  return (
    <svg width="32" height="32" viewBox="-16 -16 32 32" className="block" aria-hidden="true">
      <path d="M-13-7.500A15 15 0 0 1 13-7.500H0A7.500 7.500 0 0 0-6.500 3.750z" fill="#dd4b3e" />
      <path d="M13-7.500A15 15 0 0 1 0 15L6.500 3.750A7.500 7.500 0 0 0 0-7.500z" fill="#fdd039" />
      <path d="M0 15A15 15 0 0 1-13-7.500L-6.500 3.750A7.500 7.500 0 0 0 6.500 3.750z" fill="#1da362" />
      <circle r="7.200" fill="#fff" />
      <circle r="5.600" fill="#4a86ee" />
    </svg>
  );
}

function PlayerIcon() {
  return (
    <Svg w={28} h={28}>
      <path d="M6 3l21-1v23l-4 1z" fill="#6fa9cf" />
      <path d="M21 3v22M24 3v22" stroke="#d4ebf7" />
      <path d="M1 4h18v21H1z" fill="#8fc0e0" stroke="#b9dcf0" />
      <circle cx="11" cy="14" r="8" fill="#ef7a1c" stroke="#f7b071" />
      <path d="M8 9l9 5-9 6z" fill="#fff" />
    </Svg>
  );
}

function FolderIcon() {
  return (
    <Svg w={34} h={32}>
      <path d="M2 4l2-2h8l2 3h16v6H2z" fill="#f3e08c" />
      <path d="M5 3h3v2H5z" fill="#3aa63a" />
      <path d="M13 5h3v2h-3z" fill="#d8432c" />
      <path d="M21 7h3v2h-3z" fill="#2d8fd0" />
      <path d="M1 9h32l-1 19H2z" fill="#f6e9a8" stroke="#d9bf5e" />
      <path d="M6 29V20c0-2 1-3 3-3h16c2 0 3 1 3 3v9h-4v-5H10v5z" fill="#9ad4ee" stroke="#5ea9d0" />
    </Svg>
  );
}

function PaintIcon() {
  return (
    <Svg w={34} h={32}>
      <path d="M15 6C7 6 1 12 2 20c1 5 5 2 7 3s1 5 6 5c8 0 14-6 14-12S23 6 15 6z" fill="#bcdcf0" stroke="#8fb4cf" />
      <circle cx="7" cy="20" r="2.500" fill="#e0503c" />
      <circle cx="12" cy="13" r="2.500" fill="#5fb84a" />
      <circle cx="19" cy="11" r="2.500" fill="#f2c230" />
      <circle cx="15" cy="21" r="2.500" fill="#16324a" />
      <path d="M28 7L17 31" stroke="#e08a3c" strokeWidth="2.600" />
      <path d="M25 1l8 2-3 5h-5z" fill="#b98a5c" />
    </Svg>
  );
}

const runningLook =
  "flex h-[38px] items-center justify-center rounded-xs border border-[#8e959a] bg-[linear-gradient(160deg,#8b8f92,#3b4043_40%,#1a1f23)]";

function Taskbar() {
  return (
    <footer className="flex h-[39px] shrink-0 justify-between border-t border-[#8b9094] bg-[linear-gradient(110deg,#070b10,#0b1019_28%,#070c10_36%,#1b2024_38%,#1a1f24_45%,#0a0e16_49%,#080d11_52%,#1b2023_55%,#1a1f22_57%,#0a0e17_60%,#060b0f_70%,#0a0f17_85%,#15191d)] text-white">
      <div className="flex items-start">
        <button aria-label="Start" className="ml-2">
          <Svg w={38} h={38}>
            <defs>
              <radialGradient id="orb" cx=".5" cy=".9" r=".9">
                <stop stopColor="#39c5ff" />
                <stop offset=".45" stopColor="#0f5c9c" />
                <stop offset=".8" stopColor="#35556f" />
                <stop offset="1" stopColor="#a9bccb" />
              </radialGradient>
            </defs>
            <circle cx="19" cy="19" r="18" fill="url(#orb)" stroke="#6f8ea6" />
            <path d="M12 10c3-2 5-1 7 0l-2 8c-2-1-4-2-7 0z" fill="#f0602c" />
            <path d="M20 11c3 1 5 1 9-1l-2 8c-3 2-6 2-9 0z" fill="#8ac640" />
            <path d="M9 20c3-2 5-1 7 0l-2 8c-2-1-4-2-7 0z" fill="#48aee8" />
            <path d="M18 20c3 2 5 2 8 0l-2 9c-3 1-5 1-8-1z" fill="#fcc52c" />
          </Svg>
        </button>
        <button aria-label="Internet Explorer" className={`ml-[14px] w-[53px] ${runningLook}`}>
          <IeIcon />
        </button>
        <div className="h-[38px] w-[5px] rounded-r-xs border border-[#6d747a] bg-[#2a2f33]" />
        <button aria-label="Chrome" className={`ml-1 w-[58px] ${runningLook}`}>
          <ChromeIcon />
        </button>
        <button aria-label="Media Player" className="flex h-[38px] w-16 items-center justify-center">
          <PlayerIcon />
        </button>
        <button aria-label="Explorer" className="flex h-[38px] w-16 items-center justify-center">
          <FolderIcon />
        </button>
        <button
          aria-label="Photoshop"
          className="flex h-[38px] w-[58px] items-start justify-center rounded-xs border border-[#d5d7d8] bg-[linear-gradient(160deg,#dcdddd,#8f9192_45%,#b4b6b7)] pt-[2px]"
        >
          <span className="flex h-7 w-[29px] items-center justify-center border-2 border-[#7fb0e8] bg-[#1a1560] font-['Noto_Sans_CJK_KR',sans-serif] text-[15px] font-medium text-[#a5c8f5]">
            Ps
          </span>
        </button>
        <button aria-label="Paint" className={`ml-1 w-[53px] ${runningLook}`}>
          <PaintIcon />
        </button>
        <div className="h-[38px] w-[5px] rounded-r-xs border border-[#6d747a] bg-[#2a2f33]" />
      </div>
      <div className="flex items-center font-['Noto_Sans_CJK_KR',sans-serif]">
        <Svg w={16} h={17}>
          <circle cx="7" cy="7" r="7" fill="#4f9ad0" />
          <path d="M2 3c3-3 7-3 9-1l-2 4-4 1-1 4-3-3z" fill="#7ab648" />
          <path d="M5 15l8-8 3 3-8 6z" fill="#f0c04a" />
          <path d="M13 7l3 3 1-3z" fill="#e07c6c" />
        </Svg>
        <span className="ml-[5px] w-4 pb-[3px] text-center text-[17px] leading-5 font-medium">가</span>
        <span className="ml-[3px] w-4 pb-[3px] text-center text-[17px] leading-5">漢</span>
        <span className="ml-[6px] flex h-4 w-4 items-center justify-center rounded-full border border-[#b8c4e8] bg-[#1a2ea8] text-[12px] leading-3 font-bold">?</span>
        <div className="ml-[9px]">
          <Svg w={9} h={17}>
            <path d="M3.500 1.500h5v3h-5zM1.500 3.500h4v3h-4z" fill="#10151b" stroke="#fff" />
            <path d="M2 13h5l-2.500 3z" fill="#fff" />
          </Svg>
        </div>
        <div className="ml-[10px]">
          <Svg w={8} h={5}>
            <path d="M4 0l4 5H0z" fill="#fff" />
          </Svg>
        </div>
        <div className="ml-[14px]">
          <Svg w={15} h={12}>
            <path d="M0 10h2v2H0zM3 8h2v4H3zM6 6h2v6H6zM9 3h2v9H9zM12 0h2v12h-2z" fill="#fff" />
          </Svg>
        </div>
        <div className="w-[100px] pb-px text-center text-[12px] leading-[17px]">
          <p>오전 3:44</p>
          <p>2019-10-06</p>
        </div>
        <button aria-label="Show desktop" className="h-[38px] w-[14px] self-start border border-[#8b9094] bg-linear-to-b from-[#5b6064] to-[#14181c]" />
      </div>
    </footer>
  );
}

function App() {
  return (
    <div className="flex h-screen flex-col overflow-hidden bg-[#191919] font-['DejaVu_Sans_Condensed','Noto_Sans',sans-serif]">
      <div className="relative flex min-h-0 flex-1 flex-col">
        <MenuBar />
        <OptionsBar />
        <div className="flex min-h-0 flex-1 border-t border-[#141414]">
          <Toolbar />
          <div className="w-[39px] shrink-0 bg-[#343434]">
            <div className="h-5 bg-[#191919]" />
          </div>
          <DocumentArea />
          <IconDock />
          <div className="flex w-[220px] shrink-0 flex-col bg-[#343434]">
            <div className="flex h-3 shrink-0 items-center justify-end bg-linear-to-b from-[#262626] to-[#191919] pr-1">
              <Chevrons />
            </div>
            <ColorPanel />
            <AdjustmentsPanel />
            <LayersPanel />
          </div>
        </div>
        <PropertiesPanel />
        <HistoryPanel />
      </div>
      <Taskbar />
    </div>
  );
}

export default App;
